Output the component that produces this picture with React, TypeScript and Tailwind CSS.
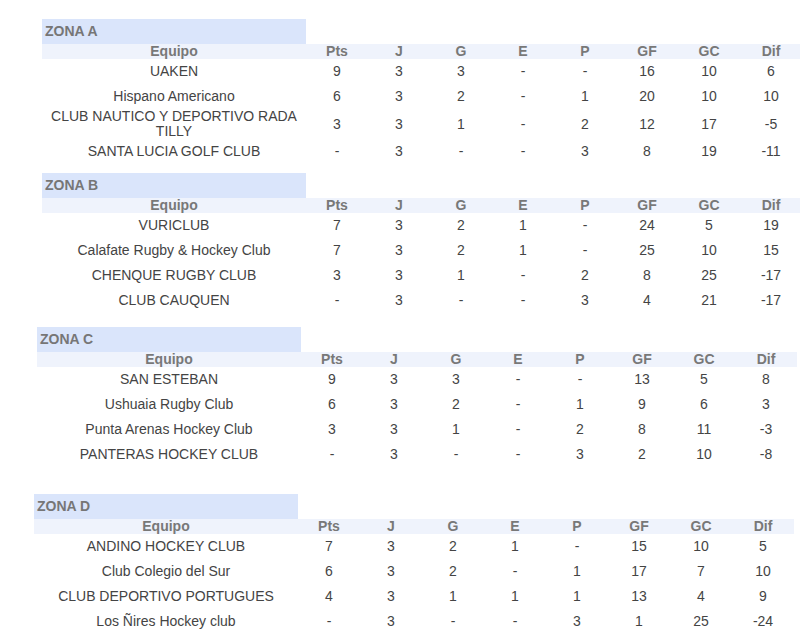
import React from "react";

type Row = [string, string, string, string, string, string, string, string, string];

const zonas: { name: string; ml: string; mt: string; rows: Row[] }[] = [
  {
    name: "ZONA A",
    ml: "ml-[42px]",
    mt: "mt-[19px]",
    rows: [
      ["UAKEN", "9", "3", "3", "-", "-", "16", "10", "6"],
      ["Hispano Americano", "6", "3", "2", "-", "1", "20", "10", "10"],
      ["CLUB NAUTICO Y DEPORTIVO RADA TILLY", "3", "3", "1", "-", "2", "12", "17", "-5"],
      ["SANTA LUCIA GOLF CLUB", "-", "3", "-", "-", "3", "8", "19", "-11"],
    ],
  },
  {
    name: "ZONA B",
    ml: "ml-[42px]",
    mt: "mt-[9px]",
    rows: [
      ["VURICLUB", "7", "3", "2", "1", "-", "24", "5", "19"],
      ["Calafate Rugby & Hockey Club", "7", "3", "2", "1", "-", "25", "10", "15"],
      ["CHENQUE RUGBY CLUB", "3", "3", "1", "-", "2", "8", "25", "-17"],
      ["CLUB CAUQUEN", "-", "3", "-", "-", "3", "4", "21", "-17"],
    ],
  },
  {
    name: "ZONA C",
    ml: "ml-[37px]",
    mt: "mt-[14px]",
    rows: [
      ["SAN ESTEBAN", "9", "3", "3", "-", "-", "13", "5", "8"],
      ["Ushuaia Rugby Club", "6", "3", "2", "-", "1", "9", "6", "3"],
      ["Punta Arenas Hockey Club", "3", "3", "1", "-", "2", "8", "11", "-3"],
      ["PANTERAS HOCKEY CLUB", "-", "3", "-", "-", "3", "2", "10", "-8"],
    ],
  },
  {
    name: "ZONA D",
    ml: "ml-[34px]",
    mt: "mt-[27px]",
    rows: [
      ["ANDINO HOCKEY CLUB", "7", "3", "2", "1", "-", "15", "10", "5"],
      ["Club Colegio del Sur", "6", "3", "2", "-", "1", "17", "7", "10"],
      ["CLUB DEPORTIVO PORTUGUES", "4", "3", "1", "1", "1", "13", "4", "9"],
      ["Los Ñires Hockey club", "-", "3", "-", "-", "3", "1", "25", "-24"],
    ],
  },
];

const headers = ["Equipo", "Pts", "J", "G", "E", "P", "GF", "GC", "Dif"];

function Zona({ z }: { z: (typeof zonas)[number] }) {
  return (
    <table
      className={`${z.ml} ${z.mt} table-fixed border-collapse w-[760px] shrink-0`}
    >
      <colgroup>
        <col className="w-[264px]" />
        {headers.slice(1).map((h) => (
          <col key={h} className="w-[62px]" />
        ))}
      </colgroup>
      <tbody>
        <tr className="h-[25px]">
          <td className="bg-[#dae5fb] p-0 pl-[3px] text-left text-[14px] leading-[15px] font-bold text-[#767676]">
            {z.name}
          </td>
          <td colSpan={8} className="p-0"></td>
        </tr>
        <tr className="h-[15px] bg-[#eff3fc]">
          {headers.map((h) => (
            <td
              key={h}
              className="p-0 text-center text-[14px] leading-[15px] font-bold text-[#787878]"
            >
              {h}
            </td>
          ))}
        </tr>
        {z.rows.map((r, i) => (
          <tr key={i} className="h-[25px]">
            {r.map((c, j) => (
              <td
                key={j}
                className={`p-0 ${j === 0 ? "px-[4px]" : ""} text-center align-middle text-[14px] leading-[15px] text-[#444444]`}
              >
                {c}
              </td>
            ))}
          </tr>
        ))}
      </tbody>
    </table>
  );
}

export default function App() {
  return (
    <div
      className="w-[800px] h-[643px] overflow-hidden bg-white flex flex-col"
      style={{ fontFamily: '"Liberation Sans", Arial, sans-serif' }}
    >
      {zonas.map((z) => (
        <Zona key={z.name} z={z} />
      ))}
    </div>
  );
}
